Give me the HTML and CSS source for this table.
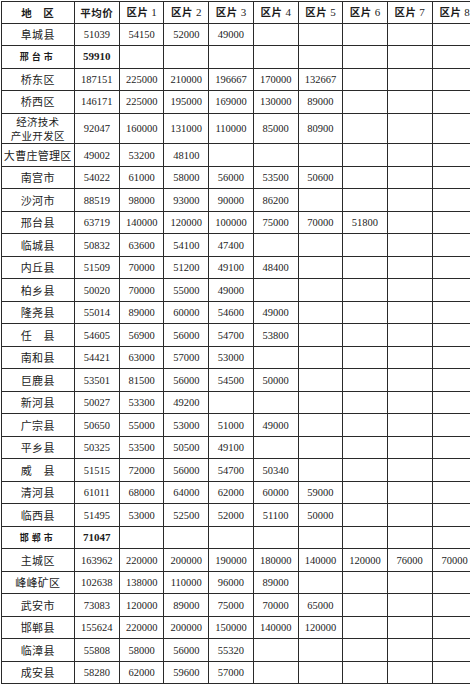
FILE: index.html
```html
<!DOCTYPE html>
<html lang="zh">
<head>
<meta charset="utf-8">
<title>区片价格表</title>
<link rel="stylesheet" href="styles.css">
</head>
<body>
<div class="frame">
<table class="price">
<colgroup>
<col class="c-name"><col class="c-a"><col class="c-b"><col class="c-c"><col class="c-d"><col class="c-e"><col class="c-f"><col class="c-g"><col class="c-h"><col class="c-i">
</colgroup>
<thead>
<tr class="head">
<th class="name">地　区</th><th class="cn">平均价</th><th>区片 <span class="num">1</span></th><th>区片 <span class="num">2</span></th><th>区片 <span class="num">3</span></th><th>区片 <span class="num">4</span></th><th>区片 <span class="num">5</span></th><th class="gray">区片 <span class="num">6</span></th><th>区片 <span class="num">7</span></th><th class="gray">区片 <span class="num">8</span></th>
</tr>
</thead>
<tbody>
<tr><td class="name">阜城县</td><td>51039</td><td>54150</td><td>52000</td><td>49000</td><td></td><td></td><td class="gray"></td><td></td><td class="gray"></td></tr>
<tr class="city"><td class="name">邢台市</td><td class="avg">59910</td><td></td><td></td><td></td><td></td><td></td><td class="gray"></td><td></td><td class="gray"></td></tr>
<tr><td class="name">桥东区</td><td>187151</td><td>225000</td><td>210000</td><td>196667</td><td>170000</td><td>132667</td><td class="gray"></td><td></td><td class="gray"></td></tr>
<tr><td class="name">桥西区</td><td>146171</td><td>225000</td><td>195000</td><td>169000</td><td>130000</td><td>89000</td><td class="gray"></td><td></td><td class="gray"></td></tr>
<tr class="double"><td class="name two"><div class="line">经济技术</div><div class="line">产业开发区</div></td><td>92047</td><td>160000</td><td>131000</td><td>110000</td><td>85000</td><td>80900</td><td class="gray"></td><td></td><td class="gray"></td></tr>
<tr><td class="name">大曹庄管理区</td><td>49002</td><td>53200</td><td>48100</td><td></td><td></td><td></td><td class="gray"></td><td></td><td class="gray"></td></tr>
<tr><td class="name">南宫市</td><td>54022</td><td>61000</td><td>58000</td><td>56000</td><td>53500</td><td>50600</td><td class="gray"></td><td></td><td class="gray"></td></tr>
<tr><td class="name">沙河市</td><td>88519</td><td>98000</td><td>93000</td><td>90000</td><td>86200</td><td></td><td class="gray"></td><td></td><td class="gray"></td></tr>
<tr><td class="name">邢台县</td><td>63719</td><td>140000</td><td>120000</td><td>100000</td><td>75000</td><td>70000</td><td class="gray">51800</td><td></td><td class="gray"></td></tr>
<tr><td class="name">临城县</td><td>50832</td><td>63600</td><td>54100</td><td>47400</td><td></td><td></td><td class="gray"></td><td></td><td class="gray"></td></tr>
<tr><td class="name">内丘县</td><td>51509</td><td>70000</td><td>51200</td><td>49100</td><td>48400</td><td></td><td class="gray"></td><td></td><td class="gray"></td></tr>
<tr><td class="name">柏乡县</td><td>50020</td><td>70000</td><td>55000</td><td>49000</td><td></td><td></td><td class="gray"></td><td></td><td class="gray"></td></tr>
<tr><td class="name">隆尧县</td><td>55014</td><td>89000</td><td>60000</td><td>54600</td><td>49000</td><td></td><td class="gray"></td><td></td><td class="gray"></td></tr>
<tr><td class="name">任　县</td><td>54605</td><td>56900</td><td>56000</td><td>54700</td><td>53800</td><td></td><td class="gray"></td><td></td><td class="gray"></td></tr>
<tr><td class="name">南和县</td><td>54421</td><td>63000</td><td>57000</td><td>53000</td><td></td><td></td><td class="gray"></td><td></td><td class="gray"></td></tr>
<tr><td class="name">巨鹿县</td><td>53501</td><td>81500</td><td>56000</td><td>54500</td><td>50000</td><td></td><td class="gray"></td><td></td><td class="gray"></td></tr>
<tr><td class="name">新河县</td><td>50027</td><td>53300</td><td>49200</td><td></td><td></td><td></td><td class="gray"></td><td></td><td class="gray"></td></tr>
<tr><td class="name">广宗县</td><td>50650</td><td>55000</td><td>53000</td><td>51000</td><td>49000</td><td></td><td class="gray"></td><td></td><td class="gray"></td></tr>
<tr><td class="name">平乡县</td><td>50325</td><td>53500</td><td>50500</td><td>49100</td><td></td><td></td><td class="gray"></td><td></td><td class="gray"></td></tr>
<tr><td class="name">威　县</td><td>51515</td><td>72000</td><td>56000</td><td>54700</td><td>50340</td><td></td><td class="gray"></td><td></td><td class="gray"></td></tr>
<tr><td class="name">清河县</td><td>61011</td><td>68000</td><td>64000</td><td>62000</td><td>60000</td><td>59000</td><td class="gray"></td><td></td><td class="gray"></td></tr>
<tr><td class="name">临西县</td><td>51495</td><td>53000</td><td>52500</td><td>52000</td><td>51100</td><td>50000</td><td class="gray"></td><td></td><td class="gray"></td></tr>
<tr class="city"><td class="name">邯郸市</td><td class="avg">71047</td><td></td><td></td><td></td><td></td><td></td><td class="gray"></td><td></td><td class="gray"></td></tr>
<tr><td class="name">主城区</td><td>163962</td><td>220000</td><td>200000</td><td>190000</td><td>180000</td><td>140000</td><td class="gray">120000</td><td>76000</td><td class="gray">70000</td></tr>
<tr><td class="name">峰峰矿区</td><td>102638</td><td>138000</td><td>110000</td><td>96000</td><td>89000</td><td></td><td class="gray"></td><td></td><td class="gray"></td></tr>
<tr><td class="name">武安市</td><td>73083</td><td>120000</td><td>89000</td><td>75000</td><td>70000</td><td>65000</td><td class="gray"></td><td></td><td class="gray"></td></tr>
<tr><td class="name">邯郸县</td><td>155624</td><td>220000</td><td>200000</td><td>150000</td><td>140000</td><td>120000</td><td class="gray"></td><td></td><td class="gray"></td></tr>
<tr><td class="name">临漳县</td><td>55808</td><td>58000</td><td>56000</td><td>55320</td><td></td><td></td><td class="gray"></td><td></td><td class="gray"></td></tr>
<tr><td class="name">成安县</td><td>58280</td><td>62000</td><td>59600</td><td>57000</td><td></td><td></td><td class="gray"></td><td></td><td class="gray"></td></tr>
</tbody>
</table>
</div>
</body>
</html>
```

FILE: styles.css
```css
html, body {
  margin: 0;
  padding: 0;
  background: #ffffff;
  overflow: hidden;
}

.frame {
  width: 470px;
  height: 686px;
  overflow: hidden;
  padding: 1px 0 0 1px;
  box-sizing: border-box;
}

.price {
  border-collapse: collapse;
  table-layout: fixed;
  width: 475px;
  color: #1c1c1c;
  font-family: "Liberation Serif", "Noto Sans CJK SC", serif;
  font-size: 10.5px;
}

.c-name { width: 72.5px; }
.c-a { width: 45.5px; }
.c-b { width: 44.3px; }
.c-c { width: 45px; }
.c-d { width: 44.4px; }
.c-e { width: 45px; }
.c-f { width: 44.6px; }
.c-g { width: 44.4px; }
.c-h { width: 45px; }
.c-i { width: 45px; }

.price th,
.price td {
  border: 1px solid #2a2a2a;
  padding: 0;
  text-align: center;
  vertical-align: middle;
  line-height: 13px;
  white-space: nowrap;
  overflow: hidden;
}

.price th {
  font-family: "Noto Sans CJK SC", sans-serif;
  font-weight: 700;
  font-size: 10.5px;
  letter-spacing: 0.5px;
}

.price th .num {
  font-family: "Liberation Serif", serif;
  font-weight: 400;
  font-size: 11px;
  letter-spacing: 0;
}

.price th.gray,
.price td.gray {
  border-left-color: #8a8a8a;
}

.head { height: 21.7px; }
.price tbody tr { height: 22.5px; }
.price tbody tr.double { height: 30.7px; }

.price td.name {
  font-family: "Noto Sans CJK SC", sans-serif;
  font-size: 11px;
  font-weight: 400;
  letter-spacing: 0.3px;
}

.price td.two .line {
  font-size: 10.5px;
  line-height: 13.5px;
  height: 13.5px;
}

.price tr.city td.name {
  font-size: 9px;
  font-weight: 700;
  letter-spacing: 3px;
}

.price td.avg {
  font-weight: 700;
  font-size: 11px;
}
```
